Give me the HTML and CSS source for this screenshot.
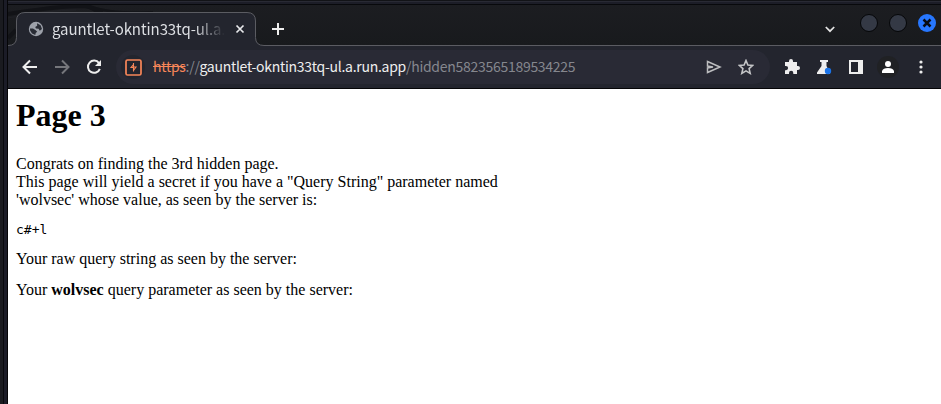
FILE: index.html
```
<!DOCTYPE html>
<html lang="en">
<head>
<meta charset="utf-8">
<title>gauntlet</title>
<link rel="stylesheet" href="styles.css">
</head>
<body>
<div class="frame">
  <div class="edge"></div>
  <div class="window">
    <header class="tabstrip">
      <svg class="wallpaper" width="250" height="41" viewBox="0 0 250 41"><g fill="none" stroke="#121317"><path stroke-width="4" d="M0 9Q50 1 76 1Q88 3 91 9M78 0Q96 10 145 8M0 33L8 25"/><path stroke="#202126" d="M0 13Q40 5 68 5M95 7Q130 12 165 8"/></g></svg>
      <svg class="tab-shape" width="933" height="34" viewBox="0 0 933 34"><path fill="#23252e" d="M0 33.5Q8 33.5 8 25.5V9Q8 .5 16.500 .5H239.500Q248 .5 248 9V25.500Q248 33.500 256 33.500H933V34H0Z"/><path fill="none" stroke="#5b5c62" d="M0 33.500Q8.500 33.500 8.500 25.500V9Q8.500 .5 17 .5H239Q247.500 .5 247.500 9V25.500Q247.500 33.500 256 33.500H933"/></svg>
      <div class="tab">
        <svg width="16" height="16" viewBox="0 0 16 16"><circle cx="8" cy="8" r="7.200" fill="#9da1aa"/><path fill="#292c35" d="M9 2.300L12.600 4.300 14 8 11.800 9.700 10.600 7.800 8 7.400 7.200 6 9.200 4.800ZM2 7.500H5L7.700 9.300 9.200 10.800 7.700 12 7.300 14 4 12.500 2.100 9.500Z"/></svg>
        <span class="tab-title">gauntlet-okntin33tq-ul.a.</span>
        <svg class="tab-close" width="10" height="10" viewBox="0 0 10 10"><path d="M1.500 1.500L8.500 8.500M8.500 1.500L1.500 8.500" stroke="#e8e9eb" stroke-width="1.700"/></svg>
      </div>
      <svg class="new-tab" width="12" height="12" viewBox="0 0 12 12"><path d="M6 0V12M0 6H12" stroke="#eee" stroke-width="2"/></svg>
      <div class="controls">
        <svg width="10" height="7" viewBox="0 0 10 7"><path d="M.8 1L5 5.200 9.200 1" fill="none" stroke="#e4e4e4" stroke-width="1.700"/></svg>
        <i class="dot"></i><i class="dot"></i>
        <svg class="close-window" width="18" height="18" viewBox="0 0 18 18"><circle cx="9" cy="9" r="9" fill="#2777ff"/><path d="M5.500 5.500L12.500 12.500M12.500 5.500L5.500 12.500" stroke="#080b12" stroke-width="2.500"/></svg>
      </div>
    </header>
    <nav class="toolbar">
      <svg class="back" width="16" height="16" viewBox="0 0 16 16"><path d="M15 8H2M8 1.500L1.500 8 8 14.500" fill="none" stroke="#eee" stroke-width="2"/></svg>
      <svg class="forward" width="16" height="16" viewBox="0 0 16 16"><path d="M1 8H14M8 1.500L14.500 8 8 14.500" fill="none" stroke="#75767b" stroke-width="2"/></svg>
      <svg class="reload" width="16" height="16" viewBox="0 0 16 16"><path d="M13 4.100A6.100 6.100 0 1 0 13.800 9.800" fill="none" stroke="#eee" stroke-width="2"/><path d="M15 1V7H9Z" fill="#eee"/></svg>
      <div class="address">
        <span class="badge"><svg width="17" height="17" viewBox="0 0 17 17"><rect x="1" y="1" width="15" height="15" rx="1.500" fill="none" stroke="#f88659" stroke-width="1.700"/><path d="M8.500 4V5.500L6 8.500H8.500V12.500M8.500 5V8H11L8.500 11.500" fill="none" stroke="#f88659" stroke-width="1.100"/></svg></span>
        <span class="url"><s>https</s><span>://</span><b>gauntlet-okntin33tq-ul.a.run.app</b><span>/hidden5823565189534225</span></span>
        <svg class="send" width="16" height="14" viewBox="0 0 16 14"><path d="M1.500 1.500L14 7 1.500 12.500V8L7 7 1.500 6Z" fill="none" stroke="#bcbdbf" stroke-width="1.500"/></svg>
        <svg class="star" width="16" height="16" viewBox="0 0 16 16"><path d="M8 1.500L9.900 6 14.700 6.400 11.100 9.600 12.200 14.400 8 11.900 3.800 14.400 4.900 9.600 1.300 6.400 6.100 6Z" fill="none" stroke="#c4c5c7" stroke-width="1.600"/></svg>
      </div>
      <svg class="puzzle" width="16" height="16" viewBox="0 0 16 16"><path fill="#eee" d="M1 3H5V2A2 2 0 0 1 9 2V3H13V7H14A2 2 0 0 1 14 11H13V15H9.300V14A2 2 0 0 0 5 14V15H1V11.200H2A2 2 0 0 0 2 7H1Z"/></svg>
      <svg class="flask" width="16" height="16" viewBox="0 0 16 16"><path fill="#eee" d="M4 1H12V3H10.500V7L14 14V15H1V13.500L5.500 7V3H4Z"/><circle cx="12" cy="12" r="3.200" fill="#1a73e8"/></svg>
      <svg class="panel" width="14" height="14" viewBox="0 0 14 14"><path fill="#eee" fill-rule="evenodd" d="M0 0H14V14H0ZM2 2V12H9V2Z"/></svg>
      <span class="avatar"><svg width="14" height="14" viewBox="0 0 14 14"><circle cx="7" cy="4" r="3" fill="#fff"/><path fill="#fff" d="M1 13V11Q2 8 7 8T13 11V13Z"/></svg></span>
      <svg class="menu" width="4" height="14" viewBox="0 0 4 14"><g fill="#eee"><circle cx="2" cy="2" r="1.600"/><circle cx="2" cy="7" r="1.600"/><circle cx="2" cy="12" r="1.600"/></g></svg>
    </nav>
    <main class="page">
      <h1>Page 3</h1>
      <p>Congrats on finding the 3rd hidden page.<br>This page will yield a secret if you have a "Query String" parameter named<br>'wolvsec' whose value, as seen by the server is:</p>
      <pre>c#+l</pre>
      <p>Your raw query string as seen by the server:</p>
      <p>Your <b>wolvsec</b> query parameter as seen by the server:</p>
    </main>
  </div>
</div>
</body>
</html>
```
FILE: styles.css
```
* { box-sizing: border-box; }
body { margin: 0; overflow: hidden; background: #1a1b20; }
svg { display: block; flex: none; }
.frame { display: flex; width: 941px; height: 404px; }
.edge { width: 8px; border-right: 1px solid #050507; background: linear-gradient(90deg, #1a1b20 3px, #08090d 3px, #08090d 4px, #1b1c27 4px); }
.window { width: 933px; display: flex; flex-direction: column; }
.tabstrip { position: relative; height: 46px; display: flex; background: linear-gradient(#121317 1px, #292a34 1px, #292a34 2px, #1c1d27 2px, #1c1d27 4px, #08090c 4px, #08090c 5px, #1c1d21 5px, #181a1d 46px); }
.wallpaper { position: absolute; left: 0; top: 5px; }
.tab-shape { position: absolute; left: 0; top: 12px; }
.tab { position: relative; display: flex; align-items: center; width: 240px; height: 34px; margin: 12px 0 0 8px; padding-left: 12px; }
.tab-title { width: 174px; margin-left: 8px; white-space: nowrap; font: 15px/22px "Noto Sans CJK SC", sans-serif; letter-spacing: -0.08px; color: #dcdee2; -webkit-mask-image: linear-gradient(90deg, #000 142px, transparent 173px); mask-image: linear-gradient(90deg, #000 142px, transparent 173px); }
.tab-close { margin-left: 9px; }
.new-tab { position: relative; margin: 23px 0 0 16px; }
.controls { position: relative; display: flex; margin: 0 5px 0 auto; }
.controls svg:first-child { margin: 26px 25px 0 0; }
.dot { width: 18px; height: 18px; margin: 14px 11px 0 0; border: 1px solid #050608; border-radius: 50%; background: #343945; }
.close-window { margin-top: 14px; }
.toolbar { display: flex; align-items: center; height: 43px; background: #23252e; border-bottom: 1px solid #050507; padding-left: 14px; }
.forward { margin-left: 16px; }
.reload { margin-left: 16px; }
.address { display: flex; align-items: center; width: 654px; height: 34px; margin-left: 14px; border-radius: 17px; background: #292a35; padding-left: 5px; }
.badge { display: grid; place-items: center; width: 24px; height: 24px; border-radius: 50%; background: #23252e; }
.url { width: 553px; margin-left: 8px; font: 14px/20px "Noto Sans CJK SC", sans-serif; letter-spacing: -0.28px; margin-top: -2px; color: #85878e; white-space: nowrap; }
.url b { font-weight: 400; color: #eee; }
.url s { color: #f88659; }
.star { margin-left: 16px; }
.puzzle { margin-left: 14px; }
.flask { margin-left: 16px; }
.panel { margin-left: 17px; }
.avatar { display: grid; place-items: center; width: 22px; height: 22px; border-radius: 50%; background: #202124; margin-left: 14px; }
.menu { margin-left: 20px; }
.page { flex: 1; background: #fff; padding: 8px; color: #000; font: 16px/18px "Liberation Serif", serif; }
h1 { margin: 0 0 21px; font-size: 32px; line-height: 37px; }
p { margin: 0 0 13px; }
pre { margin: 0 0 13px; font: 13px/15px "DejaVu Sans Mono", monospace; }
```
